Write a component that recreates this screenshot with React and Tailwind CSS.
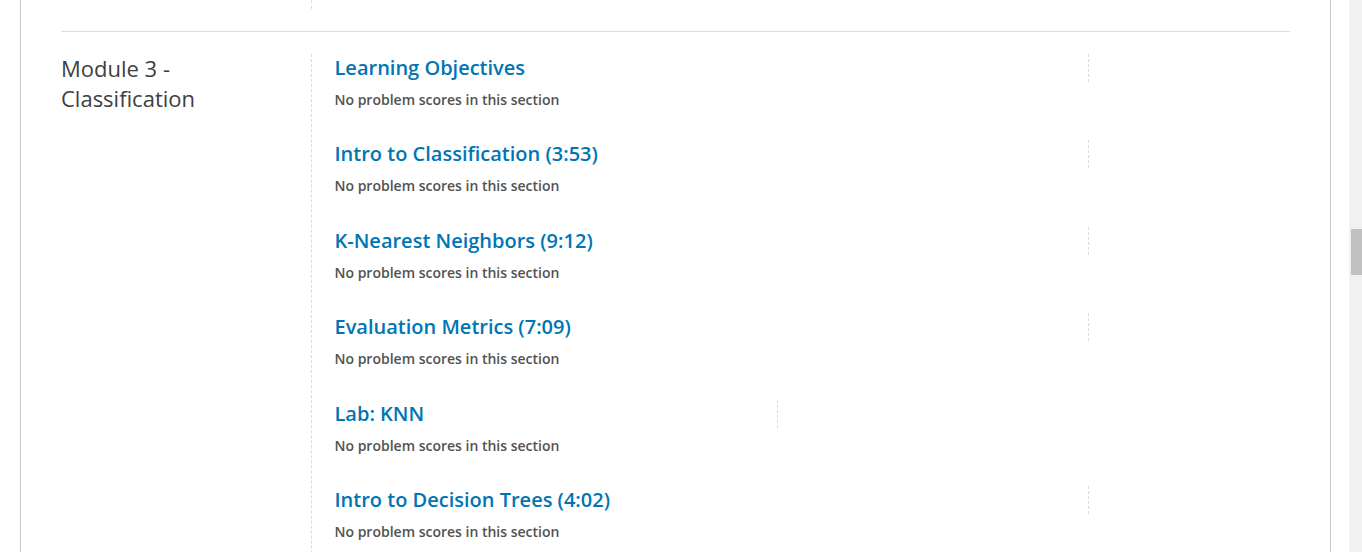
import React from 'react';

const sections = [
    { title: 'Learning Objectives', width: 'w-[754px]' },
    { title: 'Intro to Classification (3:53)', width: 'w-[754px]' },
    { title: 'K-Nearest Neighbors (9:12)', width: 'w-[754px]' },
    { title: 'Evaluation Metrics (7:09)', width: 'w-[754px]' },
    { title: 'Lab: KNN', width: 'w-[443px]' },
    { title: 'Intro to Decision Trees (4:02)', width: 'w-[754px]' },
];

function SectionItem({ title, width }) {
    return (
        <div className="mb-[30.4px]">
            <div className={`flex h-[28px] ${width}`}>
                <h3 className="flex-1 text-[20px] leading-[28px] font-semibold text-[#0075b4]">
                    {title}
                </h3>
                <div className="h-[28px] border-l border-dashed border-[#dcdcdc]" />
            </div>
            <p className="mt-[8px] text-[14px] leading-[20px] font-semibold text-[#525252]">
                No problem scores in this section
            </p>
        </div>
    );
}

export default function App() {
    return (
        <div
            className="flex h-[552px] overflow-hidden bg-white"
            style={{ fontFamily: '"Open Sans", sans-serif' }}
        >
            <div className="w-[1349px] shrink-0">
                <div className="ml-[20px] w-[1311px] h-full border-x border-[#c8c8c8] px-[40px]">
                    {/* tail of previous module */}
                    <div className="flex h-[9px]">
                        <div className="w-[250px]" />
                        <div className="border-l border-dashed border-[#dcdcdc]" />
                    </div>

                    <div className="mt-[22px] border-t border-[#dedede]" />

                    {/* module 3 */}
                    <div className="flex pt-[22px]">
                        <div className="w-[250px] shrink-0">
                            <h2 className="-mt-px text-[22px] leading-[30px] text-[#404040]">
                                Module 3 -<br />Classification
                            </h2>
                        </div>
                        <div className="flex-1 border-l border-dashed border-[#dcdcdc] pl-[22.5px] h-[600px]">
                            {sections.map((s) => (
                                <SectionItem key={s.title} title={s.title} width={s.width} />
                            ))}
                        </div>
                    </div>
                </div>
            </div>

            {/* scrollbar */}
            <div className="w-[13px] h-full bg-[#f1f1f1] pl-[2px]">
                <div className="mt-[229px] h-[46px] w-[11px] bg-[#c1c1c1]" />
            </div>
        </div>
    );
}
